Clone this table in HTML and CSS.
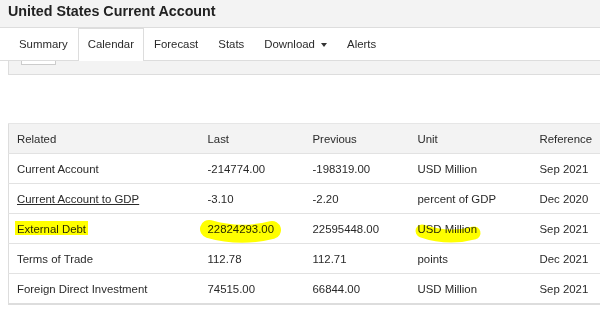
FILE: index.html
```html
<!doctype html>
<html lang="en">
    <head>
        <meta charset="UTF-8" />
        <meta name="viewport" content="width=device-width, initial-scale=1.0" />
        <title>United States Current Account</title>
        <link rel="stylesheet" href="styles.css">
    </head>
    <body>
        <div class="topbar">
            <h1>United States Current Account</h1>
        </div>
        <ul class="tabs">
            <li class="tab first">Summary</li>
            <li class="tab active">Calendar</li>
            <li class="tab">Forecast</li>
            <li class="tab">Stats</li>
            <li class="tab">Download <span class="caret"></span></li>
            <li class="tab">Alerts</li>
        </ul>
        <div class="subpanel">
            <div class="stub"></div>
        </div>

        <div class="table-wrap">
            <table class="related">
                <colgroup>
                    <col class="c-name" />
                    <col class="c-last" />
                    <col class="c-prev" />
                    <col class="c-unit" />
                    <col class="c-ref" />
                </colgroup>
                <thead>
                    <tr>
                        <th>Related</th>
                        <th>Last</th>
                        <th>Previous</th>
                        <th>Unit</th>
                        <th>Reference</th>
                    </tr>
                </thead>
                <tbody>
                    <tr>
                        <td>Current Account</td>
                        <td>-214774.00</td>
                        <td>-198319.00</td>
                        <td>USD Million</td>
                        <td>Sep 2021</td>
                    </tr>
                    <tr>
                        <td><a href="#">Current Account to GDP</a></td>
                        <td>-3.10</td>
                        <td>-2.20</td>
                        <td>percent of GDP</td>
                        <td>Dec 2020</td>
                    </tr>
                    <tr>
                        <td>External Debt</td>
                        <td>22824293.00</td>
                        <td>22595448.00</td>
                        <td>USD Million</td>
                        <td>Sep 2021</td>
                    </tr>
                    <tr>
                        <td>Terms of Trade</td>
                        <td>112.78</td>
                        <td>112.71</td>
                        <td>points</td>
                        <td>Dec 2021</td>
                    </tr>
                    <tr>
                        <td>Foreign Direct Investment</td>
                        <td>74515.00</td>
                        <td>66844.00</td>
                        <td>USD Million</td>
                        <td>Sep 2021</td>
                    </tr>
                </tbody>
            </table>

            <!-- highlighter strokes drawn over the table -->
            <svg class="marker" width="600" height="190" viewBox="0 0 600 190">
                <path d="M7 105 L80 105" stroke-width="14" />
                <path d="M201 106 Q232 115 264 107" stroke-width="18" stroke-linecap="round" />
                <path d="M414 108 Q440 117 466 110" stroke-width="13" stroke-linecap="round" />
            </svg>
        </div>
    </body>
</html>
```

FILE: styles.css
```css
body {
    font-family: "Liberation Sans", Arial, sans-serif;
    font-size: 11.4px;
    color: #2a2a2a;
    margin: 0;
    width: 600px;
    height: 309px;
    overflow: hidden;
}
.topbar {
    background-color: #f3f3f3;
    height: 27px;
    padding: 0 8px;
    border-bottom: 1px solid #ddd;
}
h1 {
    margin: 0;
    font-size: 14.3px;
    line-height: 22px;
    color: #222;
}
.tabs {
    display: flex;
    list-style: none;
    margin: 0;
    padding: 0 0 0 8px;
    height: 32px;
    border-bottom: 1px solid #ddd;
}
.tab {
    padding: 0 9px;
    line-height: 31px;
    border: 1px solid transparent;
    border-bottom: none;
}
.tab.first {
    padding-left: 10px;
}
.tab.active {
    background-color: #fff;
    border-color: #ddd;
    height: 32px;
}
.caret {
    display: inline-block;
    width: 0;
    height: 0;
    margin-left: 3px;
    vertical-align: middle;
    border-top: 4px solid #333;
    border-left: 3px solid transparent;
    border-right: 3px solid transparent;
}
.subpanel {
    margin-left: 8px;
    height: 13px;
    background-color: #f3f3f3;
    border-left: 1px solid #ddd;
    border-bottom: 1px solid #ddd;
}
.stub {
    margin-left: 12px;
    width: 33px;
    height: 3px;
    background-color: #fff;
    border: 1px solid #ccc;
    border-top: none;
}
.table-wrap {
    position: relative;
    margin: 48px 0 0 8px;
}
.related {
    border-collapse: collapse;
    table-layout: fixed;
    width: 610px;
    border-top: 1px solid #e6e6e6;
    border-left: 1px solid #ddd;
}
.c-name { width: 191px; }
.c-last { width: 105px; }
.c-prev { width: 105px; }
.c-unit { width: 122px; }
.c-ref { width: 87px; }
.related th,
.related td {
    height: 29px;
    padding: 0 8px;
    text-align: left;
    font-weight: normal;
    white-space: nowrap;
    border-bottom: 1px solid #e2e2e2;
}
.related th {
    background-color: #f3f3f3;
}
.related tbody tr:last-child td {
    border-bottom: 2px solid #ddd;
}
.related a {
    color: #2a2a2a;
}
.marker {
    position: absolute;
    left: 0;
    top: 0;
    mix-blend-mode: multiply;
    pointer-events: none;
}
.marker path {
    fill: none;
    stroke: #ffff00;
}
```
